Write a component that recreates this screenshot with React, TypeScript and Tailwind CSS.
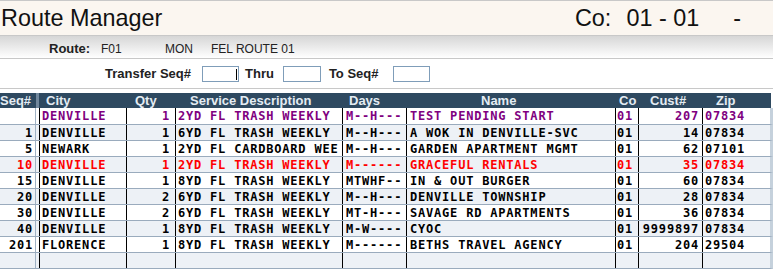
import React from "react";

type Row = {
  seq: string;
  city: string;
  qty: string;
  svc: string;
  days: string;
  name: string;
  co: string;
  cust: string;
  zip: string;
  color?: string;
};

const rows: Row[] = [
  { seq: "", city: "DENVILLE", qty: "1", svc: "2YD FL TRASH WEEKLY", days: "M--H---", name: "TEST PENDING START", co: "01", cust: "207", zip: "07834", color: "text-[#800080]" },
  { seq: "1", city: "DENVILLE", qty: "1", svc: "6YD FL TRASH WEEKLY", days: "M--H---", name: "A WOK IN DENVILLE-SVC", co: "01", cust: "14", zip: "07834" },
  { seq: "5", city: "NEWARK", qty: "1", svc: "2YD FL CARDBOARD WEE", days: "M--H---", name: "GARDEN APARTMENT MGMT", co: "01", cust: "62", zip: "07101" },
  { seq: "10", city: "DENVILLE", qty: "1", svc: "2YD FL TRASH WEEKLY", days: "M------", name: "GRACEFUL RENTALS", co: "01", cust: "35", zip: "07834", color: "text-[#ff0000]" },
  { seq: "15", city: "DENVILLE", qty: "1", svc: "8YD FL TRASH WEEKLY", days: "MTWHF--", name: "IN & OUT BURGER", co: "01", cust: "60", zip: "07834" },
  { seq: "20", city: "DENVILLE", qty: "2", svc: "6YD FL TRASH WEEKLY", days: "M--H---", name: "DENVILLE TOWNSHIP", co: "01", cust: "28", zip: "07834" },
  { seq: "30", city: "DENVILLE", qty: "2", svc: "6YD FL TRASH WEEKLY", days: "MT-H---", name: "SAVAGE RD APARTMENTS", co: "01", cust: "36", zip: "07834" },
  { seq: "40", city: "DENVILLE", qty: "1", svc: "8YD FL TRASH WEEKLY", days: "M-W----", name: "CYOC", co: "01", cust: "9999897", zip: "07834" },
  { seq: "201", city: "FLORENCE", qty: "1", svc: "8YD FL TRASH WEEKLY", days: "M------", name: "BETHS TRAVEL AGENCY", co: "01", cust: "204", zip: "29504" },
  { seq: "", city: "", qty: "", svc: "", days: "", name: "", co: "", cust: "", zip: "" },
];

const mono = { fontFamily: '"DejaVu Sans Mono", monospace' };
const arial = { fontFamily: '"Liberation Sans", Arial, sans-serif' };

export default function App() {
  return (
    <div className="w-[773px] h-[271px] bg-white overflow-hidden" style={arial}>
      {/* Title bar */}
      <div className="h-[36px] border-t border-b border-[#c8c8c8] bg-[#fbf6f0] flex items-center justify-between text-[23.4px] text-[#111] leading-[34px]">
        <div className="pl-[1px]">Route Manager</div>
        <div className="flex pr-[32px]">
          <span>Co:</span>
          <span className="ml-[15px]">01 - 01</span>
          <span className="ml-[34px]">-</span>
        </div>
      </div>
      {/* Route bar */}
      <div className="h-[23px] border-b border-[#c8c8c8] bg-gradient-to-b from-[#d6d6d6] to-[#ffffff] flex items-center text-[12px] text-[#222] pt-[3px]">
        <span className="ml-[49px] w-[52px] font-bold text-[13px] text-[#222]">Route:</span>
        <span className="w-[64px]">F01</span>
        <span className="w-[46px]">MON</span>
        <span>FEL ROUTE 01</span>
      </div>
      {/* Transfer row */}
      <div className="h-[30px] border-b border-[#c8c8c8] flex items-center text-[13px] font-bold text-[#222]">
        <span className="ml-[105px]">Transfer Seq#</span>
        <div className="ml-[11px] w-[37px] h-[16px] border border-[#7f9db9] bg-white relative">
          <span className="absolute right-[1px] top-[2px] w-[1px] h-[11px] bg-black" />
        </div>
        <span className="ml-[6px]">Thru</span>
        <div className="ml-[9px] w-[38px] h-[16px] border border-[#7f9db9] bg-white" />
        <span className="ml-[8px]">To Seq#</span>
        <div className="ml-[14px] w-[37px] h-[16px] border border-[#7f9db9] bg-white" />
      </div>
      {/* Table */}
      <div className="mt-[4px] w-[773px]">
        {/* header */}
        <div className="flex h-[15px] bg-[#2e4960] text-[#e4ecf3] text-[13px] font-bold leading-[15px] w-[771px]">
          <div className="w-[36px]">Seq#</div>
          <div className="w-[3px] bg-[#71879c]" />
          <div className="w-[87px] pl-[7px]">City</div>
          <div className="w-[49px] pl-[9px]">Qty</div>
          <div className="w-[167px] pl-[15px]">Service Description</div>
          <div className="w-[64px] pl-[7px]">Days</div>
          <div className="w-[209px] pl-[75px]">Name</div>
          <div className="w-[23px] pl-[4px]">Co</div>
          <div className="w-[64px] pl-[12px]">Cust#</div>
          <div className="w-[68px] pl-[14px]">Zip</div>
        </div>
        {rows.map((r, i) => (
          <div
            key={i}
            className={`flex ${i === 0 ? "h-[17px] leading-[17px]" : "h-[16px] leading-[16px]"} border-b border-[#9aabbd] w-[773px] border-r-[3px] border-r-[#c5d1dc] text-[12px] tracking-[0.8px] font-bold whitespace-pre ${i % 2 === 1 ? "bg-[#edf1f6]" : "bg-white"} ${r.color ?? "text-black"}`}
            style={mono}
          >
            <div className="w-[36px] border-r border-[#a0b2c4] text-right pr-[2px]">{r.seq}</div>
            <div className="w-[3px]" />
            <div className="w-[87px] border-l border-black pl-[2px]">{r.city}</div>
            <div className="w-[49px] border-l border-black text-right pr-[5px]">{r.qty}</div>
            <div className="w-[167px] border-l border-black pl-[2px] overflow-hidden">{r.svc}</div>
            <div className="w-[64px] border-l border-black pl-[3px]">{r.days}</div>
            <div className="w-[209px] border-l border-black pl-[3px]">{r.name}</div>
            <div className="w-[23px] border-l border-black pl-[1px]">{r.co}</div>
            <div className="w-[64px] border-l border-black text-right pr-[3px]">{r.cust}</div>
            <div className="w-[68px] border-l border-black pl-[2px]">{r.zip}</div>
          </div>
        ))}
      </div>
    </div>
  );
}
